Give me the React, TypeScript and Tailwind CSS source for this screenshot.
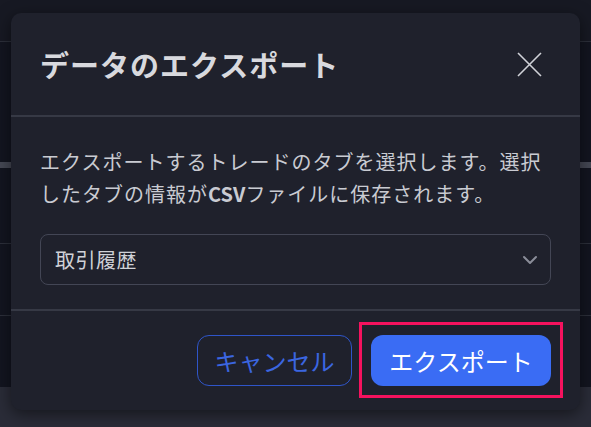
import React from "react";

export default function App() {
  return (
    <div
      className="relative w-[591px] h-[427px] overflow-hidden bg-[#131520]"
      style={{ fontFamily: '"Noto Sans CJK JP", "Noto Sans", sans-serif' }}
    >
      {/* background page */}
      <div className="flex flex-col h-full">
        <div className="h-[42px] bg-[#171923] border-b border-[#2c2f3a]" />
        <div className="h-[120px]" />
        <div className="h-[6px] bg-[#454854]" />
        <div className="h-[76px] border-b border-[#2c2f3a]" />
        <div className="h-[72px] border-b border-[#2c2f3a]" />
        <div className="h-[71px]" />
        <div className="flex-1 bg-[#2a2c38]" />
      </div>

      {/* modal */}
      <div className="absolute left-[11px] top-[13px] w-[569px] h-[397px] rounded-[10px] bg-[#1f212c] shadow-[0_4px_16px_rgba(0,0,0,0.5)] flex flex-col">
        <div className="h-[102px] flex items-center justify-between pl-[29px] pr-[38px]">
          <h2 className="text-[29px] font-bold text-[#d8d9de] leading-none tracking-[1px]">
            データのエクスポート
          </h2>
          <button className="w-[25px] h-[25px] flex items-center justify-center">
            <svg width="25" height="25" viewBox="0 0 25 25" fill="none">
              <path d="M1 1L24 24M24 1L1 24" stroke="#d0d2d8" strokeWidth="1.6" />
            </svg>
          </button>
        </div>
        <div className="h-[2px] bg-[#363945]" />
        <div className="flex-1 px-[29px] pt-[29px] pb-[24px] flex flex-col">
          <p className="text-[20px] leading-[32px] text-[#c9cbd2] tracking-[1px]">
            エクスポートするトレードのタブを選択します。選択したタブの情報が<span className="font-semibold tracking-[0px]">CSV</span>ファイルに保存されます。
          </p>
          <div className="mt-[24px] h-[51px] rounded-[8px] border border-[#434655] flex items-center justify-between pl-[14px] pr-[12px]">
            <span className="text-[20px] text-[#d0d2d8] tracking-[0.5px]">取引履歴</span>
            <svg width="16" height="10" viewBox="0 0 16 10" fill="none">
              <path d="M2 2L8 8L14 2" stroke="#8a8d99" strokeWidth="2" strokeLinecap="round" strokeLinejoin="round" />
            </svg>
          </div>
        </div>
        <div className="h-[2px] bg-[#363945]" />
        <div className="h-[99px] flex items-center justify-end gap-[19px] pr-[29px]">
          <button className="w-[155px] h-[51px] rounded-[12px] border border-[#2f55c9] text-[#3b66e0] text-[24px] leading-none">
            キャンセル
          </button>
          <div className="relative">
            <button className="w-[180px] h-[51px] rounded-[12px] bg-[#3a6cf4] text-white text-[24px] leading-none">
              エクスポート
            </button>
            <div className="absolute -left-[12px] -right-[12px] -top-[13px] -bottom-[12px] border-[3px] border-[#f5125e] pointer-events-none" />
          </div>
        </div>
      </div>
    </div>
  );
}
